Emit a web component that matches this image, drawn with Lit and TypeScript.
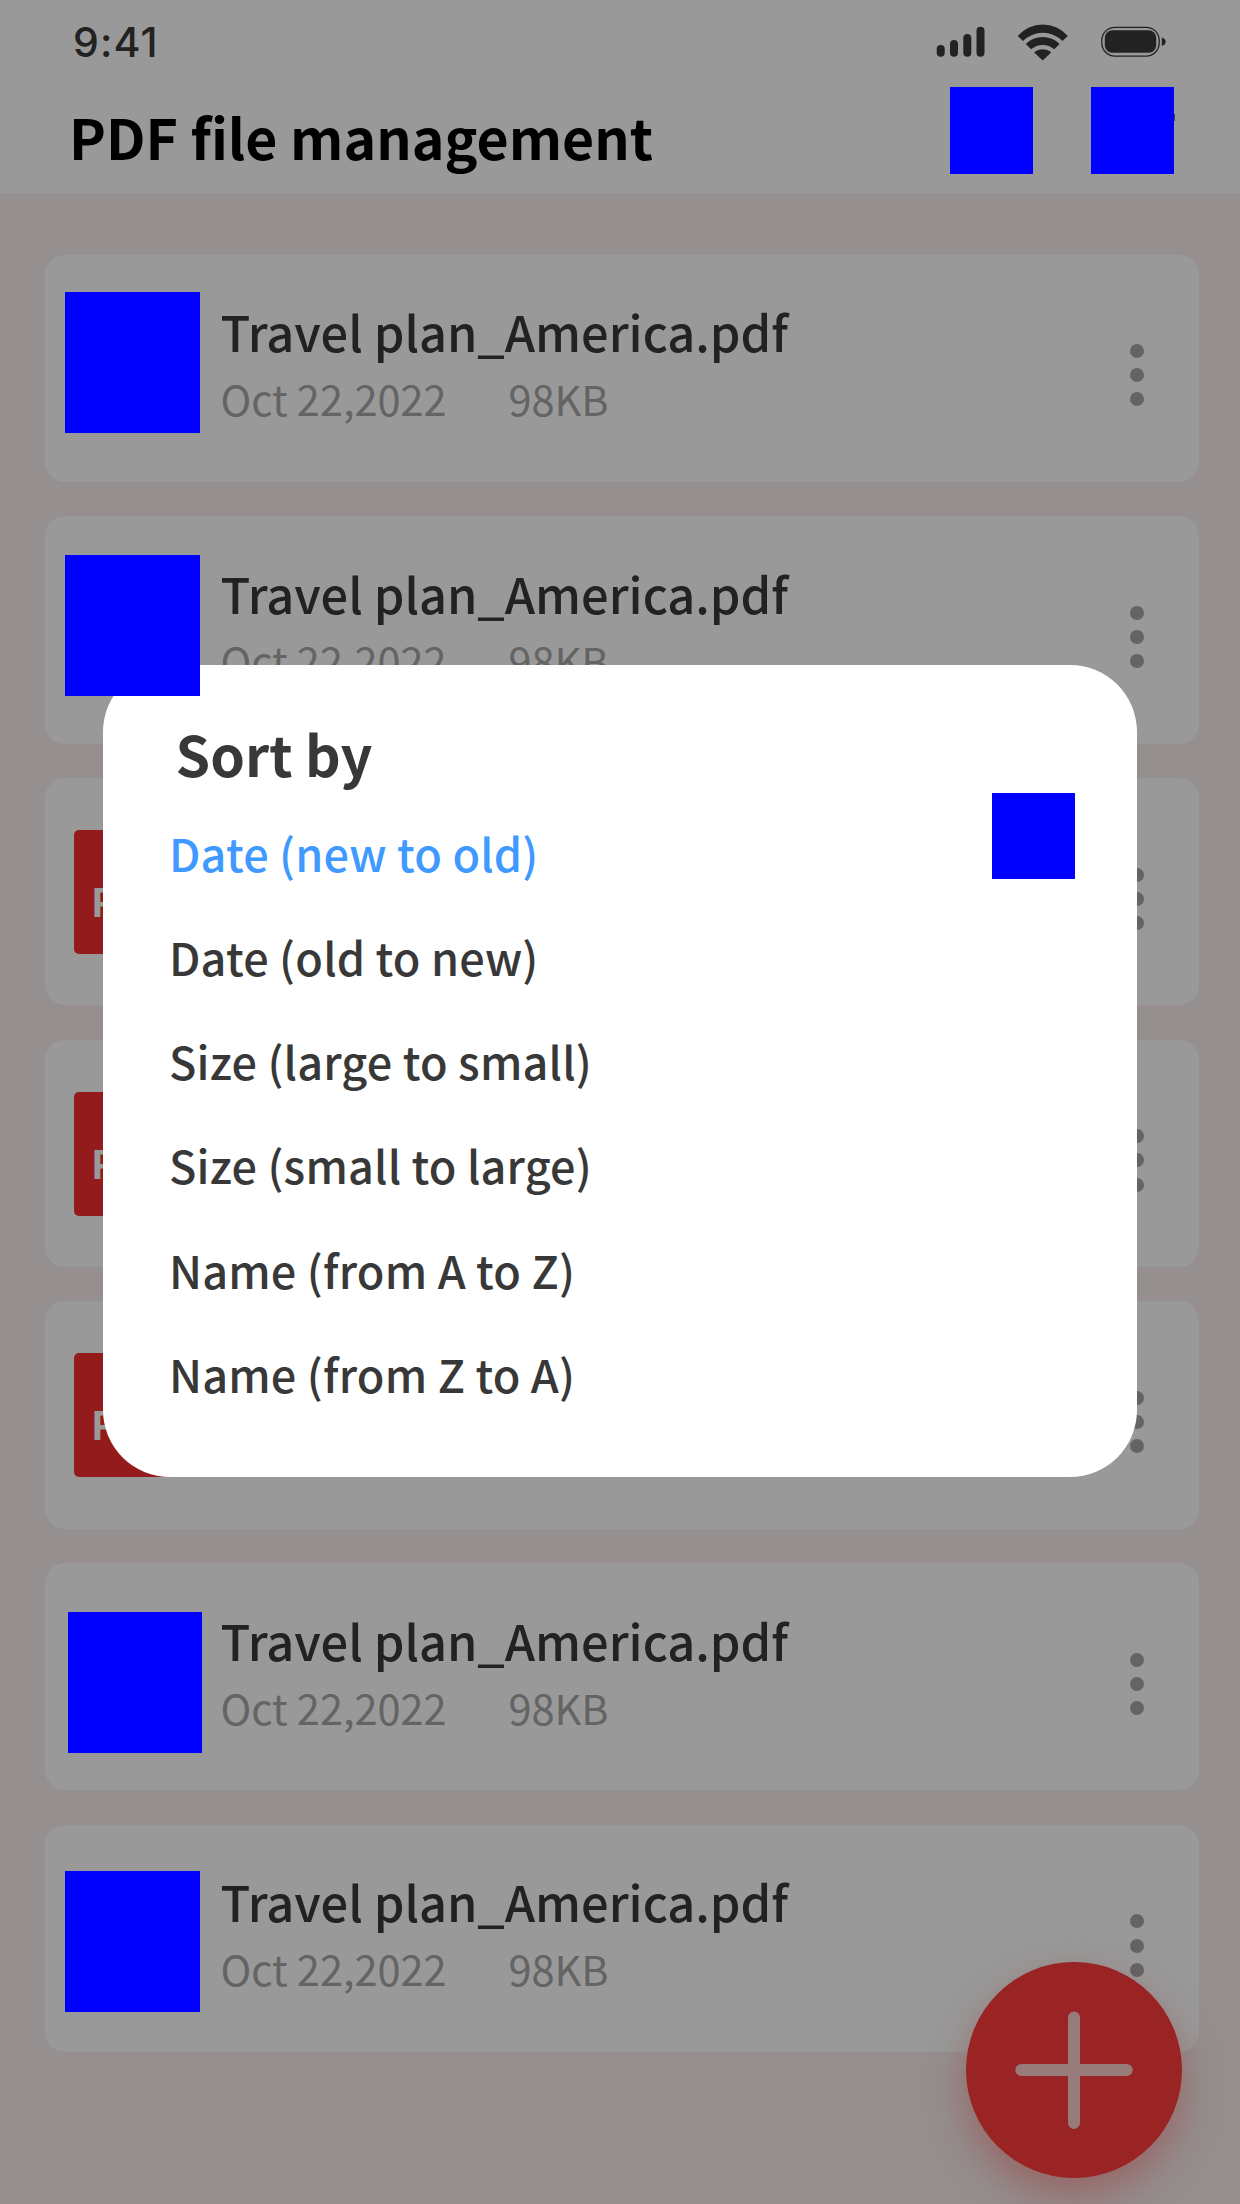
import { LitElement, html, css, svg } from "lit";
import { customElement, state } from "lit/decorators.js";
import { classMap } from "lit/directives/class-map.js";

interface FileRow {
  name: string;
  date: string;
  size: string;
  thumb: string;
}

const row = (thumb: string): FileRow => ({
  name: "Travel plan_America.pdf",
  date: "Oct 22,2022",
  size: "98KB",
  thumb,
});

@customElement("app-root")
export class AppRoot extends LitElement {
  static styles = css`
    :host {
      display: block;
      position: relative;
      width: 1240px;
      height: 2204px;
      overflow: hidden;
      background: #958f8f;
      font-family: "Noto Sans CJK SC", "Noto Sans", sans-serif;
      color: #222;
    }
    * { box-sizing: border-box; }
    .header { height: 193px; background: #999; }
    .status { display: flex; justify-content: space-between; height: 87px; padding: 0 70px 0 73px; }
    .time { font: 500 41px/50px Inter, sans-serif; letter-spacing: 1.1px; padding-top: 17px; color: #222; }
    .titlebar { display: flex; align-items: flex-start; padding: 0 65px 0 69px; }
    .title { flex: 1; margin: 14px 0 0; font-size: 55.4px; line-height: 70px; font-weight: 700; color: #000; white-space: nowrap; }
    .tool { width: 83px; height: 87px; background: #00f; margin-left: 58px; }
    .edge { width: 1px; height: 7px; margin-top: 27px; background: #444; }
    .list { display: flex; flex-direction: column; gap: 34.4px; padding: 61.7px 41px 0 45px; }
    .card { display: flex; height: 227.3px; border-radius: 20px; background: #999; }
    .thumb-col { flex: none; width: 176px; }
    .thumb { position: relative; z-index: 2; width: 135px; height: 141px; margin: 37.3px 0 0 20px; background: #00f; }
    .thumb.b { margin-top: 38.6px; }
    .thumb.f { width: 134px; margin: 48.8px 0 0 23px; }
    .thumb.g { margin-top: 46px; }
    .pdf { width: 108px; height: 124px; margin: 51.9px 0 0 29px; border-radius: 5px; background: #941b1c; color: #999; padding: 45px 0 0 17px; font-size: 39px; line-height: 50px; font-weight: 700; }
    .info { flex: 1; padding-top: 46.6px; white-space: nowrap; }
    .name { font-size: 48.75px; line-height: 60px; font-weight: 500; margin-left: -0.6px; }
    .meta { display: flex; margin-top: 12px; font-size: 41.5px; line-height: 50px; color: #646464; margin-left: -0.6px; }
    .date { width: 288px; }
    .more { flex: none; width: 14px; margin: 89.6px 55.2px 0 0; }
    .more i { display: block; width: 14px; height: 14px; border-radius: 50%; background: #646464; margin-bottom: 10.1px; }
    .dialog { position: absolute; z-index: 1; left: 103.4px; top: 664.5px; width: 1033.3px; height: 812.8px; border-radius: 67px; background: #fff; padding: 53.2px 61.8px 0 65.6px; color: #383838; }
    .heading { margin: 0 0 13.1px 6.6px; font-size: 55.5px; line-height: 70px; font-weight: 700; }
    .option { display: flex; justify-content: space-between; height: 104.2px; font-size: 45px; letter-spacing: 0.18px; line-height: 104.2px; font-weight: 500; white-space: nowrap; }
    .option.on { color: #3f99ff; }
    .mark { width: 83px; height: 86px; margin-top: -7.8px; background: #00f; }
    .fab { position: absolute; z-index: 1; left: 966px; top: 1961.5px; width: 216px; height: 216px; border-radius: 50%; background: #992423; box-shadow: 0 18px 40px rgba(153, 60, 60, 0.5); }
    svg { display: block; }
  `;

  @state() private selected = 0;

  private files = ["a", "b", "", "", "", "f", "g"].map(row);
  private options = [
    "Date (new to old)",
    "Date (old to new)",
    "Size (large to small)",
    "Size (small to large)",
    "Name (from A to Z)",
    "Name (from Z to A)",
  ];

  private statusIcons() {
    const bars = [[936.7, 45], [950, 40], [963.3, 34], [976.5, 26.8]];
    return html`<svg width="240" height="84" viewBox="930 0 240 84" fill="#222">
      ${bars.map(([x, y]) => svg`<rect x=${x} y=${y} width="8" height=${56.7 - y} rx="4" />`)}
      <path d="M1017.7 36A33 33 0 0 1 1067.8 36L1062.5 41A28 28 0 0 0 1023 41Z" />
      <path d="M1025.8 44A24 24 0 0 1 1059.6 44L1054.3 49.2A18 18 0 0 0 1031.1 49.2Z" />
      <path d="M1034 52.2A14 14 0 0 1 1051.4 52.2L1042.7 60.6Z" />
      <rect x="1101.8" y="27.3" width="57.4" height="28.8" rx="13" fill="none" stroke="#222" stroke-width="1.3" />
      <rect x="1104.8" y="30.3" width="51.4" height="22.4" rx="7.5" />
      <path d="M1161.8 37.6C1167 39 1167 44.6 1161.8 46Z" />
    </svg>`;
  }

  render() {
    return html`
      <header class="header">
        <div class="status"><span class="time">9:41</span>${this.statusIcons()}</div>
        <div class="titlebar">
          <h1 class="title">PDF file management</h1>
          <div class="tool"></div>
          <div class="tool"></div>
          <div class="edge"></div>
        </div>
      </header>
      <main class="list">
        ${this.files.map(
          (f) => html`<article class="card">
            <div class="thumb-col">
              ${f.thumb ? html`<div class="thumb ${f.thumb}"></div>` : html`<div class="pdf">P</div>`}
            </div>
            <div class="info">
              ${f.thumb
                ? html`<div class="name">${f.name}</div>
                    <div class="meta"><span class="date">${f.date}</span><span>${f.size}</span></div>`
                : ""}
            </div>
            <div class="more"><i></i><i></i><i></i></div>
          </article>`
        )}
      </main>
      <section class="dialog">
        <h2 class="heading">Sort by</h2>
        ${this.options.map(
          (label, i) => html`<div
            class=${classMap({ option: true, on: i === this.selected })}
            @click=${() => (this.selected = i)}
          >
            <span>${label}</span>${i === this.selected ? html`<div class="mark"></div>` : ""}
          </div>`
        )}
      </section>
      <div class="fab">
        <svg width="216" height="216" viewBox="0 0 216 216" stroke="#977b7b" stroke-width="12" stroke-linecap="round">
          <path d="M108 55.5V161M55.3 108H160.7" />
        </svg>
      </div>
    `;
  }
}
